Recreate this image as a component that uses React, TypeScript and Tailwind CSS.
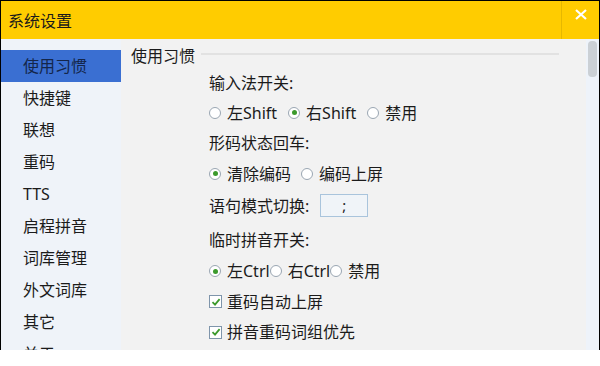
import React from "react";

const FONT = '"Noto Sans", "Noto Sans CJK SC", sans-serif';

function Radio({ checked }: { checked?: boolean }) {
  return (
    <span className="inline-flex h-[12px] w-[12px] shrink-0 items-center justify-center rounded-full border border-[#9aa6b2] bg-white">
      {checked && <span className="h-[5px] w-[5px] rounded-full bg-[#3c9a2c]" />}
    </span>
  );
}

function Check() {
  return (
    <span className="inline-flex h-[13px] w-[13px] shrink-0 items-center justify-center border border-[#7f95ab] bg-white">
      <svg width="10" height="10" viewBox="0 0 10 10">
        <path d="M1.5 5.2 L4 7.6 L8.6 2.2" fill="none" stroke="#3c9a2c" strokeWidth="1.8" />
      </svg>
    </span>
  );
}

function RadioItem({ label, checked, className }: { label: string; checked?: boolean; className?: string }) {
  return (
    <span className={"inline-flex items-center gap-[6px] " + (className ?? "")}>
      <Radio checked={checked} />
      <span>{label}</span>
    </span>
  );
}

const nav = ["使用习惯", "快捷键", "联想", "重码", "TTS", "启程拼音", "词库管理", "外文词库", "其它", "关于"];

export default function App() {
  return (
    <div className="h-[366px] w-[600px] bg-white" style={{ fontFamily: FONT }}>
      <div className="flex h-[350px] w-[600px] flex-col border-l border-r border-t border-black text-[16px] text-[#1b1b1b]">
        {/* Title bar */}
        <div className="flex h-[38px] shrink-0 items-stretch bg-[#ffcc00]">
          <div className="flex flex-1 items-center pl-[7px] pt-[1px] text-[16px] text-[#1a1a1a]">系统设置</div>
          <div className="w-px bg-[#e6b800]" />
          <div className="flex w-[37px] items-start justify-center pt-[8px]">
            <svg width="12" height="11" viewBox="0 0 12 11">
              <path d="M1 1 L11 10 M11 1 L1 10" stroke="#ffffff" strokeWidth="2.2" />
            </svg>
          </div>
        </div>
        {/* Body */}
        <div className="flex min-h-0 flex-1 overflow-hidden">
          {/* Sidebar */}
          <div className="flex w-[120px] shrink-0 flex-col bg-[#eff3f9] pt-[11px]">
            {nav.map((n, i) => (
              <div
                key={n}
                className={
                  "flex h-[32px] shrink-0 items-center pl-[22px] " +
                  (i === 0 ? "bg-[#3a6fd2] text-[#14264a]" : "text-[#1b1b1b]")
                }
              >
                {n}
              </div>
            ))}
          </div>
          {/* Content */}
          <div className="flex flex-1 flex-col bg-[#f2f2f2] pl-[10px] pr-[27px] pt-[6px]">
            <div className="flex h-[22px] items-center gap-[6px]">
              <span>使用习惯</span>
              <div className="mt-[-4px] h-[2px] flex-1 bg-[#e2e2e2]" />
            </div>
            <div className="flex flex-col pl-[78px] pt-[1px]">
              <div className="flex h-[30px] items-center">输入法开关:</div>
              <div className="flex h-[29px] items-center gap-[11px]">
                <RadioItem label="左Shift" />
                <RadioItem label="右Shift" checked />
                <RadioItem label="禁用" />
              </div>
              <div className="flex h-[31px] items-center">形码状态回车:</div>
              <div className="flex h-[31px] items-center gap-[10px]">
                <RadioItem label="清除编码" checked />
                <RadioItem label="编码上屏" />
              </div>
              <div className="flex h-[33px] items-center gap-[11px]">
                <span>语句模式切换:</span>
                <span className="flex h-[23px] w-[48px] items-center justify-center border border-[#a9c4dc] bg-[#f0f4f8] text-[15px]">
                  ;
                </span>
              </div>
              <div className="flex h-[35px] items-center">临时拼音开关:</div>
              <div className="flex h-[28px] items-center">
                <RadioItem label="左Ctrl" checked />
                <RadioItem label="右Ctrl" />
                <RadioItem label="禁用" />
              </div>
              <div className="flex h-[33px] items-center gap-[5px]">
                <Check />
                <span>重码自动上屏</span>
              </div>
              <div className="flex h-[28px] items-center gap-[5px]">
                <Check />
                <span>拼音重码词组优先</span>
              </div>
            </div>
          </div>
          {/* Scrollbar */}
          <div className="flex w-[13px] shrink-0 justify-center bg-[#eef3fa] pt-[2px]">
            <div className="h-[36px] w-[9px] rounded-[4px] bg-[#cbd0d5]" />
          </div>
        </div>
      </div>
    </div>
  );
}
